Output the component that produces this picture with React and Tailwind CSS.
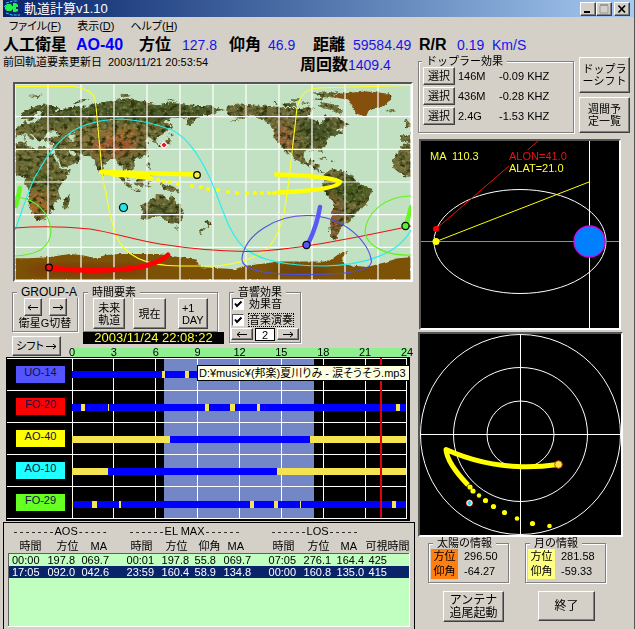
import React from "react";

const FONT = "font-['Liberation_Sans','Noto_Sans_CJK_JP',sans-serif]";
const RAISED =
  "border border-t-white border-l-white border-b-[#404040] border-r-[#404040] bg-[#d4d0c8] shadow-[inset_-1px_-1px_0_#808080]";
const ETCHED = "border border-[#808080] shadow-[1px_1px_0_#fff,inset_1px_1px_0_#fff]";
const SUNKEN = "border-2 border-t-[#555] border-l-[#555] border-b-white border-r-white";

function Button({ className = "", children, ...rest }) {
  return (
    <button type="button" className={`${RAISED} flex items-center justify-center whitespace-nowrap ${className}`} {...rest}>
      {children}
    </button>
  );
}

function Group({ title, className = "", legend = "ml-1", children }) {
  return (
    <fieldset className={`${ETCHED} min-w-0 ${className}`}>
      <legend className={`bg-[#d4d0c8] px-1 leading-3 whitespace-nowrap ${legend}`}>{title}</legend>
      {children}
    </fieldset>
  );
}

function Arrow({ left }) {
  return (
    <svg viewBox="0 0 12 7" className="h-[7px] w-[12px]" fill="none" stroke="#000">
      <path d={left ? "M11 3.500 H1 M4 1 L1 3.500 L4 6" : "M1 3.500 H11 M8 1 L11 3.500 L8 6"} />
    </svg>
  );
}

/* ---------- title bar and menu ---------- */

function TitleBar() {
  return (
    <header className="flex h-[17px] items-center gap-[3px] bg-gradient-to-r from-[#0a246a] to-[#a6caf0] pr-1 text-white">
      <svg viewBox="0 0 18 17" className="h-[17px] w-[18px]">
        <path d="M3 3 L10 1 H15 M1 7 L4 4 M3 13 L9 15 H17" fill="none" stroke="#39c8ff" strokeWidth="1" strokeDasharray="3 1" />
        <path d="M2 7 L4 4 H8 L9 6 H10 V3 H13 L15 5 V7 H13 V9 H15 V11 L13 12 H10 V9 L8 11 H4 L2 9 Z" fill="#22f04c" />
      </svg>
      <h1 className="flex-1 text-[13px] leading-4">軌道計算v1.10</h1>
      <div className="flex">
        <Button className="h-[14px] w-4" aria-label="最小化">
          <svg viewBox="0 0 10 10" className="size-[10px]"><path d="M1 7 H7 V9 H1 Z" /></svg>
        </Button>
        <Button className="h-[14px] w-4" aria-label="最大化">
          <svg viewBox="0 0 10 10" className="size-[10px]"><path d="M1 1.500 H9 V9 H1 Z" fill="none" stroke="#999" /><path d="M1 1 H9" stroke="#999" strokeWidth="2" /></svg>
        </Button>
        <Button className="ml-[2px] h-[14px] w-4" aria-label="閉じる">
          <svg viewBox="0 0 10 10" className="size-[10px]"><path d="M1.500 1.500 L8 8.500 M8 1.500 L1.500 8.500" stroke="#000" strokeWidth="1.700" /></svg>
        </Button>
      </div>
    </header>
  );
}

function MenuBar() {
  const items = [["ファイル", "F"], ["表示", "D"], ["ヘルプ", "H"]];
  return (
    <nav className="flex h-[18px] items-center gap-4 pl-[6px] text-[11px] [font-feature-settings:'palt']">
      {items.map(([label, key]) => (
        <button key={key} type="button" className="leading-4">
          {label}(<u>{key}</u>)
        </button>
      ))}
    </nav>
  );
}

function Status() {
  const b = "text-[16px] font-bold";
  const v = "text-[14px] text-[#1414ee]";
  return (
    <div className="grid h-5 grid-cols-[73px_63px_43px_47px_39px_45px_40px_66px_38px_auto] items-center leading-5 whitespace-nowrap">
      <span className={b}>人工衛星</span>
      <span className="text-[16px] font-bold text-[#0000ff]">AO-40</span>
      <span className={b}>方位</span>
      <span className={v}>127.8</span>
      <span className={b}>仰角</span>
      <span className={v}>46.9</span>
      <span className={b}>距離</span>
      <span className={v}>59584.49</span>
      <span className={b}>R/R</span>
      <span className={v}>0.19 &nbsp;Km/S</span>
    </div>
  );
}

/* ---------- world map ---------- */

// Coast outlines as longitude,latitude pairs, longitude running 0..360 east.
const LAND = [
  "0,6 0,35 4,37 10,37 11,33 15,32 19,30 22,33 30,31 33,31 33,28 36,22 38,17 43,12 51,12 49,7 42,-2 39,-7 41,-15 35,-20 35,-25 32,-29 27,-34 19,-35 17,-31 12,-18 13,-9 9,-1 9,4 4,6",
  "0,49 4,51 8,54 8,57 11,54 20,55 24,59 29,60 22,61 25,65 21,65 17,61 16,57 12,56 10,59 5,59 6,63 13,67 20,70 28,71 40,68 41,66 35,66 37,64 44,66 46,68 55,69 68,69 68,72 73,72 80,73 90,75 104,77 113,74 130,71 140,73 160,70 180,69 190,66 180,63 170,60 163,58 162,54 157,51 156,57 164,62 155,59 143,59 135,55 141,53 140,48 132,43 128,39 129,35 126,35 125,39 121,40 118,38 122,37 119,35 122,30 119,25 114,22 108,21 109,13 105,9 101,13 100,8 104,2 101,3 98,9 98,16 94,16 91,22 87,21 80,15 80,11 77,8 73,17 72,21 67,24 57,26 51,29 48,30 51,24 56,26 60,22 55,17 44,13 39,21 35,28 34,31 36,36 27,37 26,40 30,41 41,42 37,45 39,47 31,46 28,43 26,40 22,37 20,40 14,45 13,44 18,40 16,38 10,44 3,43 0,40",
  "192,66 194,70 204,71 220,70 232,70 245,68 260,68 267,69 272,67 266,62 265,59 275,56 278,52 280,55 282,62 290,60 296,58 304,52 295,49 290,47 300,46 290,43 284,40 284,35 279,31 280,25 277,29 270,30 263,28 262,22 265,18 269,21 272,18 272,16 277,15 276,10 282,9 278,8 272,13 265,16 255,20 252,25 246,31 250,24 247,26 242,34 236,40 236,48 230,54 222,59 213,61 205,58 195,55 203,59 195,60",
  "282,8 288,12 298,10 308,5 310,0 315,-2 325,-7 321,-15 319,-22 312,-26 307,-33 302,-38 297,-41 294,-47 291,-54 287,-50 286,-42 288,-32 290,-18 284,-13 279,-5 281,2",
  "114,-22 116,-29 115,-34 118,-35 124,-33 131,-31 137,-35 141,-38 147,-38 150,-37 153,-31 153,-26 149,-21 146,-19 144,-14 142,-11 140,-17 136,-15 136,-12 131,-11 127,-14 122,-18",
  "303,76 287,78 295,81 320,83 340,81 342,76 335,70 322,66 317,60 310,63 307,70",
  "359,36 354,37 351,37 351,43 358,43 360,46 360,37", "360,35 354,35 350,30 343,21 344,13 350,8 355,5 360,5",
  "354,50 360,51 360,53 357,56 356,58 354,57 356,54", "336,65 346,65 345,67 338,66",
  "44,-16 49,-12 50,-16 47,-25 44,-24", "80,9 82,7 80,6", "95,5 98,4 104,-2 106,-6 102,-4", "105,-7 114,-7 114,-9 106,-8",
  "109,1 113,3 117,7 119,5 116,-4 110,-3", "120,1 125,1 121,-1 123,-5 119,-5", "131,-1 136,-2 141,-3 147,-6 151,-10 144,-8 138,-8 133,-4",
  "120,18 122,18 122,14 124,12 120,14", "123,9 126,9 126,6 122,7", "130,34 136,36 140,41 142,39 140,35 135,34 131,31", "140,43 145,43 142,45", "142,47 144,50 142,54",
  "173,-35 178,-38 175,-41", "172,-41 174,-42 168,-47 167,-45", "145,-41 148,-41 147,-44", "275,22 280,23 285,20 281,21", "286,20 292,19 287,18",
  "280,73 290,71 298,66 295,62 287,66 275,70", "243,72 255,73 257,69 245,69", "235,74 240,72 236,71", "270,76 280,75 278,79 270,82 295,82 285,77", "250,76 260,76 255,74", "260,73 268,73 264,71",
  "12,79 25,80 20,77", "52,71 60,76 68,77 58,73", "95,80 105,79 99,78", "138,76 148,75 142,74", "30,35 34,36 32,34", "119,23 121,25 121,22", "8,39 9,43 10,39",
];
const ICE =
  "0,-70 12,-70 30,-69 50,-66 60,-67 70,-69 75,-70 82,-67 95,-66 110,-66 130,-66 150,-69 165,-71 168,-78 200,-80 208,-77 225,-75 240,-73 260,-73 285,-73 293,-67 303,-63 297,-70 300,-76 320,-78 335,-74 348,-70 360,-69 360,-90 0,-90";

const DOTS_MAP = [[158, 180], [163, 181], [170, 182], [178, 184], [192, 186], [201, 187], [208, 189], [218, 190], [228, 192], [237, 193], [247, 193], [255, 193], [262, 193], [269, 193], [274, 193]];

function WorldMap() {
  const vertical = Array.from({ length: 13 }, (_, i) => 15 + i * 33);
  const horizontal = Array.from({ length: 7 }, (_, i) => 84 + (i * 196) / 6);
  return (
    <div className={`${SUNKEN} mr-[5px] ml-[10px]`}>
      <svg viewBox="15 84 396 196" className="block h-auto w-full" role="img" aria-label="世界地図">
        <defs>
          <clipPath id="land">
            {LAND.map((p) => (
              <polygon key={p} points={p} transform="translate(15 182) scale(1.1 -1.09)" />
            ))}
          </clipPath>
          <clipPath id="ice">
            <polygon points={ICE} transform="translate(15 182) scale(1.1 -1.09)" />
          </clipPath>
          <filter id="soft" colorInterpolationFilters="sRGB"><feGaussianBlur stdDeviation="4" /></filter>
          <filter id="terrain" filterUnits="userSpaceOnUse" x="15" y="84" width="396" height="196" colorInterpolationFilters="sRGB">
            <feTurbulence type="fractalNoise" baseFrequency="0.3" numOctaves="2" seed="4" result="rough" />
            <feDisplacementMap in="SourceGraphic" in2="rough" scale="5" xChannelSelector="R" yChannelSelector="G" result="coast" />
            <feTurbulence type="fractalNoise" baseFrequency="0.16 0.24" numOctaves="4" seed="9" />
            <feColorMatrix type="matrix" values="0 0 0 0 0.16  0 0 0 0 0.2  0 0 0 0 0.05  3.500 0 0 0 -1.600" result="dark" />
            <feComposite in="dark" in2="coast" operator="in" result="shade" />
            <feTurbulence type="fractalNoise" baseFrequency="0.3" numOctaves="3" seed="21" />
            <feColorMatrix type="matrix" values="0 0 0 0 0.68  0 0 0 0 0.6  0 0 0 0 0.36  0 2.500 0 0 -1.350" result="pale" />
            <feComposite in="pale" in2="coast" operator="in" result="light" />
            <feMerge>
              <feMergeNode in="coast" />
              <feMergeNode in="shade" />
              <feMergeNode in="light" />
            </feMerge>
          </filter>
          <filter id="shore" filterUnits="userSpaceOnUse" x="15" y="84" width="396" height="196" colorInterpolationFilters="sRGB">
            <feTurbulence type="fractalNoise" baseFrequency="0.25" numOctaves="2" seed="3" result="n" />
            <feDisplacementMap in="SourceGraphic" in2="n" scale="3" xChannelSelector="R" yChannelSelector="G" />
          </filter>
        </defs>
        <rect x="15" y="84" width="396" height="196" fill="#c2e0c2" />
        <g filter="url(#terrain)">
          <g clipPath="url(#land)">
            <rect x="15" y="84" width="396" height="196" fill="#6e6c38" />
            <g filter="url(#soft)">
              <rect x="15" y="100" width="210" height="22" fill="#4a5a28" />
              <ellipse cx="100" cy="135" rx="40" ry="10" fill="#85753c" />
              <ellipse cx="113" cy="147" rx="24" ry="7" fill="#a8502c" />
              <ellipse cx="125" cy="134" rx="22" ry="6" fill="#9c6a2c" />
              <ellipse cx="38" cy="205" rx="12" ry="14" fill="#a4682a" />
              <ellipse cx="40" cy="180" rx="14" ry="8" fill="#556427" />
              <ellipse cx="285" cy="140" rx="10" ry="18" fill="#96663a" />
              <ellipse cx="318" cy="130" rx="18" ry="14" fill="#46562a" />
              <ellipse cx="350" cy="190" rx="22" ry="12" fill="#465c22" />
              <ellipse cx="333" cy="218" rx="6" ry="24" fill="#985234" />
              <ellipse cx="165" cy="210" rx="16" ry="8" fill="#566030" />
            </g>
            <path d="M65 134 L75 133 L74 142 L69 142 L69 138 Z" fill="#c2e0c2" />
          </g>
        </g>
        <g filter="url(#shore)">
          <polygon points={LAND[5]} transform="translate(15 182) scale(1.1 -1.09)" fill="#85500c" />
          <g clipPath="url(#ice)">
            <rect x="15" y="240" width="396" height="42" fill="#7c5206" />
            <ellipse cx="85" cy="270" rx="60" ry="6" fill="#7e3c08" filter="url(#soft)" />
            <ellipse cx="300" cy="270" rx="30" ry="5" fill="#6b4208" filter="url(#soft)" />
          </g>
        </g>
        <g stroke="#fff" strokeWidth="1.200">
          {vertical.map((x) => <path key={x} d={`M${x} 84 V280`} />)}
          {horizontal.map((y) => <path key={y} d={`M15 ${y} H411`} />)}
        </g>
        <g fill="none" strokeWidth="1.100">
          <path stroke="#ffff20" d="M15 86.500 H75 C85 89 94 92 95 100 C97 112 97 120 98 128 L101 160 Q103 185 106 192 Q109 215 116 235 C124 256 145 266 180 266 H213 C240 265 262 255 270 246 Q280 232 284 213 Q288 190 290 170 L296 117 C297 102 301 89 318 88 L350 87 L411 85.500" />
          <path stroke="#20f0f0" d="M15 230 C24 207 30 183 38 172 C50 150 65 134 80 127 Q100 119 122 119 Q150 121 172 130 C190 139 203 160 215 190 C225 218 233 240 247 250 C262 261 290 266 325 266 C365 265 398 254 411 230" />
          <path stroke="#ee1010" d="M15 228 Q50 225 90 229 C115 233 135 240 160 244 Q205 251 245 251.500 C290 251 350 239 411 226" />
          <path stroke="#5050e0" d="M242 258 C245 235 275 215 308 215.500 C345 216 370 243 371.500 262 C370 272 340 274.500 311 274.500 C275 275 240 272 242 258 Z" />
          <path stroke="#60f020" d="M411 196 C385 196 366 213 365 232 C367 248 390 256 411 255 M15 197 C35 198 50 212 51 232 C50 245 40 255 15 256" />
        </g>
        <g fill="none" strokeLinecap="round">
          <path stroke="#ff0" strokeWidth="4.500" d="M101 172 L196 174.500 M276 174.500 Q330 176 340 182 C338 188 312 191 278 192.500" />
          <path stroke="#ff0" strokeWidth="4" d="M104 172.500 L152 178.500" />
          <path stroke="#ff0" strokeWidth="5" d="M112 174 L148 176" />
          <path stroke="#f00" strokeWidth="5" d="M50 268 Q80 271.500 110 270 C135 269 158 265 168 255" />
          <path stroke="#5858f8" strokeWidth="4.500" d="M320 207 Q317 225 309 242" />
          <path stroke="#66f824" strokeWidth="4.500" d="M20 188 L16 206 M411 207 L407 222" />
        </g>
        {DOTS_MAP.map(([x, y]) => <circle key={x} cx={x} cy={y} r="2" fill="#ff0" />)}
        <g stroke="#000" strokeWidth="1.200">
          <circle cx="197" cy="175" r="3.300" fill="#f6f040" />
          <circle cx="123.500" cy="207.500" r="4" fill="#20e8e8" />
          <circle cx="49" cy="267.500" r="3.300" fill="#f01010" />
          <circle cx="306.500" cy="245" r="3.600" fill="#5858f8" />
          <circle cx="405.500" cy="226" r="3.600" fill="#58f030" />
        </g>
        <path d="M164 141.500 L167.500 145 L164 148.500 L160.500 145 Z" fill="#f01020" stroke="#fff" strokeWidth="1.200" />
      </svg>
    </div>
  );
}

/* ---------- control groups ---------- */

function Check({ children, focused }) {
  return (
    <label className="flex items-center gap-[5px]">
      <span className="grid size-[12px]">
        <input type="checkbox" defaultChecked className="peer col-start-1 row-start-1 size-[12px] appearance-none border border-t-[#555] border-l-[#555] border-b-white border-r-white bg-white" />
        <svg viewBox="0 0 12 12" className="pointer-events-none invisible col-start-1 row-start-1 size-[12px] peer-checked:visible">
          <path d="M3 5.500 L5 8 L9.500 3.500" fill="none" stroke="#000" strokeWidth="2" />
        </svg>
      </span>
      <span className={focused ? "leading-3 outline-1 outline-dotted outline-black" : "leading-3"}>{children}</span>
    </label>
  );
}

function Controls() {
  return (
    <div className="mt-[4px] ml-[9px] flex h-[57px] items-start gap-[5px]">
      <Group title={<span className="text-[12px]">GROUP-A</span>} className="h-[46px] w-[66px]">
        <div className="flex justify-center gap-[7px]">
          <Button className="h-[18px] w-[18px]" aria-label="前のグループ"><Arrow left /></Button>
          <Button className="h-[18px] w-[18px]" aria-label="次のグループ"><Arrow /></Button>
        </div>
        <p className="mt-px text-center leading-3 whitespace-nowrap">衛星G切替</p>
      </Group>
      <div>
        <Group title="時間要素" className="h-[46px] w-[135px]">
          <div className="flex h-[31px] items-center px-[9px] leading-3">
            <Button className="h-[31px] w-[33px]">未来<br />軌道</Button>
            <Button className="ml-2 h-[31px] w-[33px]">現在</Button>
            <Button className="ml-3 h-[31px] w-[31px] text-left">+1<br />DAY</Button>
          </div>
        </Group>
        <output className="block h-[12px] w-[141px] bg-black text-center text-[13px] leading-3 whitespace-nowrap text-[#ffff30]">
          2003/11/24 22:08:22
        </output>
      </div>
      <Group title="音響効果" className="h-[57px] w-[72px]">
        <div className="flex flex-col gap-[4px] pl-[2px]">
          <Check>効果音</Check>
          <Check focused>音楽演奏</Check>
        </div>
        <div className="mt-[2px] flex justify-between px-[1px]">
          <Button className="h-[12px] w-[22px]" aria-label="前の曲"><Arrow left /></Button>
          <input aria-label="曲番号" defaultValue="2" className="h-[13px] w-[20px] border border-black bg-white text-center leading-3" />
          <Button className="h-[12px] w-[22px]" aria-label="次の曲"><Arrow /></Button>
        </div>
      </Group>
    </div>
  );
}

/* ---------- visibility chart ---------- */

const SATS = [
  { name: "UO-14", tint: "bg-[#5454ff]", y: 371, marks: [[162, 165], [185, 189]] },
  { name: "FO-20", tint: "bg-[#ff0000]", y: 404, marks: [[81, 85], [108, 109], [205, 209], [230, 235], [257, 260], [396, 400]] },
  { name: "AO-40", tint: "bg-[#ffff00]", y: 436, marks: [[72, 170], [310, 406]] },
  { name: "AO-10", tint: "bg-[#20ffff]", y: 468, marks: [[72, 108], [277, 406]] },
  { name: "FO-29", tint: "bg-[#66ff22]", y: 501, marks: [[72, 73], [92, 97], [119, 121], [250, 254], [274, 278], [300, 301], [392, 396]] },
];
const HOURS = [0, 3, 6, 9, 12, 15, 18, 21, 24];

function Timeline() {
  return (
    <section className="mr-[8px] ml-[3px]">
      <div className="-mt-[7px] flex items-end pl-[6px]">
        <Button className="mb-px h-[20px] w-[49px] gap-px [font-feature-settings:'palt']">シフト<Arrow /></Button>
        <div className="ml-[11px] flex h-[9px] flex-1 items-center justify-between bg-[#90f090] pr-[3px]">
          {HOURS.map((h) => (
            <span key={h} className="flex w-0 justify-center leading-[9px]">{h}</span>
          ))}
        </div>
      </div>
      <div className="relative flex h-[164px] border border-black bg-black">
        <div className="w-[65px]">
          {SATS.map((s) => (
            <div key={s.name} className="flex h-8 items-center justify-end border-t border-white pr-[7px]">
              <span className={`${s.tint} h-[17px] w-[49px] text-center leading-3 text-[#101040]`}>{s.name}</span>
            </div>
          ))}
          <div className="border-t border-white" />
        </div>
        <svg viewBox="72 358 337 161" preserveAspectRatio="none" className="h-[161px] min-w-0 flex-1" role="img" aria-label="可視時間帯">
          <rect x="164" y="358" width="150" height="161" fill="#7386c6" />
          <g fill="#fff">
            {[358, 390, 422, 454, 486, 518].map((y) => <rect key={y} x="72" y={y} width="335" height="1" />)}
            {HOURS.map((h) => <rect key={h} x={h === 24 ? 406 : 72 + h * 14 - (h ? 1 : 0)} y="358" width="1" height="161" />)}
          </g>
          {SATS.map((s) => (
            <g key={s.name}>
              <rect x="72" y={s.y} width="334" height="7" fill="#0000ff" />
              {s.marks.map(([a, b]) => (
                <rect key={a} x={a} y={s.y} width={b - a} height="7" fill="#f4e452" />
              ))}
            </g>
          ))}
          <rect x="380" y="358" width="2" height="160" fill="#e00010" />
        </svg>
        <div role="tooltip" className="absolute top-[7px] -right-px flex h-[16px] w-[213px] items-center border border-black bg-[#ffffe1] pl-px leading-3 whitespace-nowrap [font-feature-settings:'palt']">
          D:¥music¥(邦楽)夏川りみ - 涙そうそう.mp3
        </div>
      </div>
    </section>
  );
}

/* ---------- pass table ---------- */

const PASSES = [
  ["00:00", "197.8", "069.7", "00:01", "197.8", "55.8", "069.7", "07:05", "276.1", "164.4", "425"],
  ["17:05", "092.0", "042.6", "23:59", "160.4", "58.9", "134.8", "00:00", "160.8", "135.0", "415"],
];
const COLUMNS = ["時間", "方位", "MA", "時間", "方位", "仰角", "MA", "時間", "方位", "MA", "可視時間"];

function Dashes({ n }) {
  return <span className="font-['Liberation_Mono',monospace] text-[10px]">{"-".repeat(n)}</span>;
}

function PassTable() {
  return (
    <section className="mt-px mr-[3px] border-t border-l border-r border-black px-[4px] pb-[2px]">
      <table className="w-full table-fixed border-collapse text-left whitespace-nowrap">
        <colgroup>
          <col className="w-[37px]" /><col className="w-[34px]" /><col className="w-[45px]" />
          <col className="w-[35px]" /><col className="w-[33px]" /><col className="w-[29px]" /><col className="w-[45px]" />
          <col className="w-[35px]" /><col className="w-[33px]" /><col className="w-[31px]" /><col />
        </colgroup>
        <thead>
          <tr className="h-[17px] leading-[14px]">
            <th colSpan={3} className="pl-1 font-normal"><Dashes n={7} />AOS<Dashes n={5} /></th>
            <th colSpan={4} className="pl-1 font-normal"><Dashes n={6} />EL MAX<Dashes n={6} /></th>
            <th colSpan={4} className="pl-1 font-normal"><Dashes n={6} />LOS<Dashes n={5} /></th>
          </tr>
          <tr className="h-[13px] leading-3">
            {COLUMNS.map((c, i) => (
              <th key={i} className={i === 10 ? "font-normal" : i < 3 ? "pl-[11px] font-normal" : "pl-[6px] font-normal"}>{c}</th>
            ))}
          </tr>
        </thead>
        <tbody className="border border-t-[#606060] border-r-white border-b-white border-l-[#606060] bg-[#c0ffc0]">
          {PASSES.map((row, i) => (
            <tr key={i} className={i === 1 ? "h-3 bg-[#0a246a] leading-3 text-white" : "h-3 leading-3"}>
              {row.map((v, j) => (
                <td key={j} className={j === 10 || j === 0 ? "pl-[3px]" : "pl-[2px]"}>{v}</td>
              ))}
            </tr>
          ))}
          <tr className="h-[49px]"><td colSpan={11} /></tr>
        </tbody>
      </table>
    </section>
  );
}

/* ---------- right column ---------- */

function Doppler() {
  const rows = [["146M", "-0.09 KHZ"], ["436M", "-0.28 KHZ"], ["2.4G", "-1.53 KHZ"]];
  return (
    <div className="flex gap-[5px]">
      <Group title="ドップラー効果" legend="ml-[3px]" className="h-[78px] flex-1">
        <div className="flex flex-col gap-[2px] pl-[4px]">
          {rows.map(([band, shift]) => (
            <div key={band} className="flex items-center">
              <Button className="h-[18px] w-[32px] leading-3">選択</Button>
              <span className="ml-[3px] w-[41px] leading-3">{band}</span>
              <span className="leading-3 whitespace-nowrap">{shift}</span>
            </div>
          ))}
        </div>
      </Group>
      <div className="mt-[2px] flex w-[51px] flex-col gap-1 leading-[12px]">
        <Button className="h-9">ドップラ<br />ーシフト</Button>
        <Button className="h-9">週間予<br />定一覧</Button>
      </div>
    </div>
  );
}

function Orbit() {
  return (
    <div className={`${SUNKEN} relative mt-[6px] mr-[9px] ml-px`}>
      <svg viewBox="421 141 198 187" className="block h-auto w-full bg-black" role="img" aria-label="軌道">
        <ellipse cx="520" cy="241.500" rx="86" ry="52" fill="none" stroke="#fff" />
        <path d="M421 241.500 H619" stroke="#20e020" />
        <path d="M589.500 141 V328" stroke="#fff" />
        <path d="M436 229 L538 141" stroke="#f01010" />
        <path d="M436 241.500 L589 182" stroke="#ff0" />
        <circle cx="589.500" cy="241.500" r="15.500" fill="#0080ff" stroke="#c010e0" strokeWidth="1.300" />
        <circle cx="436" cy="229" r="3" fill="#f00" />
        <circle cx="436" cy="241.500" r="3.500" fill="#ff0" />
      </svg>
      <div className="absolute inset-x-0 top-[9px] flex pl-[9px] leading-3 text-[#ffff30]">
        <span className="w-[79px]">MA &nbsp;110.3</span>
        <span className="bg-black"><span className="text-[#f01010]">ALON=41.0</span><br />ALAT=21.0</span>
      </div>
    </div>
  );
}

const DOTS_SKY = [[470, 488, 2.6], [473, 492, 2.6], [479, 496.5, 2.2], [485.5, 501.5, 2.6], [493.5, 507.5, 2.6], [504.5, 513.5, 2.6], [517, 519.5, 2.3], [532.5, 524.5, 2.6], [549.5, 527, 2.3]];

function Sky() {
  return (
    <div className={`${SUNKEN} mt-[2px] mr-[7px]`}>
      <svg viewBox="420 335 201 201" className="block h-auto w-full bg-black" role="img" aria-label="天球図">
        <g fill="none" stroke="#fff">
          <circle cx="520.500" cy="435.500" r="33.500" />
          <circle cx="520.500" cy="435.500" r="67" />
          <circle cx="520.500" cy="435.500" r="100" />
          <path d="M520.500 335 V536 M420 435.500 H621" />
        </g>
        <path d="M558 465.500 Q498 474 446 450.500 Q447 464 468 486" fill="none" stroke="#ff0" strokeWidth="5" strokeLinejoin="round" />
        {DOTS_SKY.map(([x, y, r]) => <circle key={x} cx={x} cy={y} r={r} fill="#ff0" />)}
        <circle cx="558.500" cy="465.500" r="3.800" fill="#ffe840" stroke="#f02020" />
        <circle cx="469.500" cy="504" r="3.500" fill="#f02020" />
        <circle cx="469.500" cy="504" r="2.600" fill="#20e0e8" stroke="#fff" />
      </svg>
    </div>
  );
}

function BodyInfo({ title, tint, az, el }) {
  return (
    <Group title={title} legend="ml-[4px]" className="h-[46px] w-[81px]">
      <dl className="grid grid-cols-[27px_auto] pl-[2px] leading-[15px]">
        <dt className={`${tint} text-center`}>方位</dt><dd className="pl-[6px]">{az}</dd>
        <dt className={`${tint} text-center`}>仰角</dt><dd className="pl-[6px]">{el}</dd>
      </dl>
    </Group>
  );
}

export default function App() {
  return (
    <main className={`${FONT} min-h-screen overflow-hidden border-r border-[#555] bg-[#d4d0c8] pl-[3px] text-[11px] text-black`}>
      <TitleBar />
      <MenuBar />
      <Status />
      <div className="flex">
        <div className="min-w-0 flex-1">
          <div className="flex h-[27px] whitespace-nowrap">
            <span className="leading-[14px]">前回軌道要素更新日</span>
            <span className="ml-[6px] w-[192px] leading-[15px]">2003/11/21 20:53:54</span>
            <span className="text-[16px] leading-5 font-bold">周回数</span>
            <span className="text-[14px] leading-5 text-[#1414ee]">1409.4</span>
          </div>
          <WorldMap />
          <Controls />
          <Timeline />
          <PassTable />
        </div>
        <aside className="w-[216px] pr-[4px]">
          <Doppler />
          <Orbit />
          <Sky />
          <div className="flex gap-4 pl-[10px]">
            <BodyInfo title="太陽の情報" tint="bg-[#ff8010]" az="296.50" el="-64.27" />
            <BodyInfo title="月の情報" tint="bg-[#ffff80]" az="281.58" el="-59.33" />
          </div>
          <div className="mt-[8px] flex gap-[34px] pl-[25px] text-[12px] leading-[13px]">
            <Button className="h-[31px] w-[61px]">アンテナ<br />追尾起動</Button>
            <Button className="h-[30px] w-[57px]">終了</Button>
          </div>
        </aside>
      </div>
    </main>
  );
}
